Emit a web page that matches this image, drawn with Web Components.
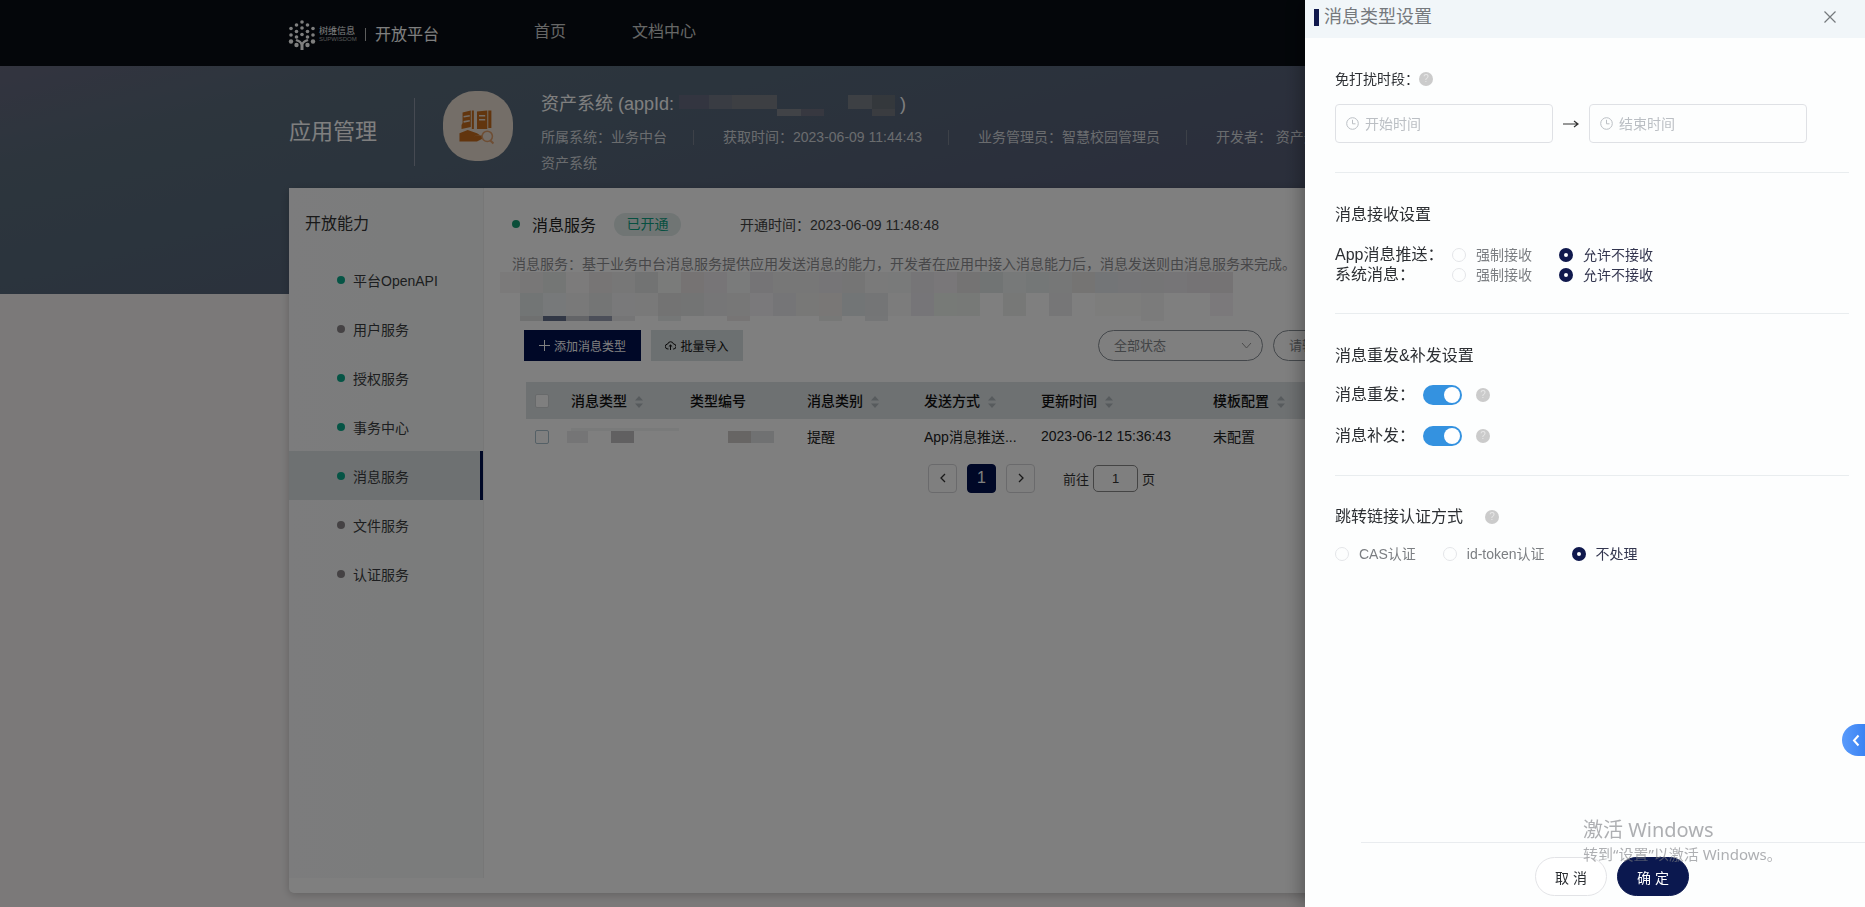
<!DOCTYPE html>
<html lang="zh-CN">
<head>
<meta charset="utf-8">
<title>开放平台</title>
<style>
html,body{margin:0;height:100%}
body{font-family:"Liberation Sans","Noto Sans CJK SC",sans-serif;font-size:14px;color:#333;background:#f6f3f3;overflow:hidden}
</style>
</head>
<body>
<platform-app></platform-app>
<script>
const define = (name, html, init) => {
  const tpl = document.createElement('template');
  tpl.innerHTML = '<style>*{box-sizing:border-box}button,input,select{font:inherit;color:inherit;margin:0}h1,h2,h3,p{margin:0;font-weight:400}</style>' + html;
  customElements.define(name, class extends HTMLElement {
    connectedCallback() {
      if (this.shadowRoot) return;
      this.attachShadow({mode: 'open'}).append(tpl.content.cloneNode(true));
      if (init) init(this.shadowRoot, this);
    }
  });
};

define('app-header', `
<style>
:host{display:block;background:#080d14;color:#fff}
.wrap{max-width:1287px;margin:0 auto;height:66px;display:flex;align-items:center}
.logo{width:28px;height:32px;margin:3px 3px 0 -1px;flex:none}
.brand{width:38px;margin-top:2px;font-size:9px;line-height:10px}
.brand small{display:block;font-size:6px;line-height:6px;color:#aaa}
.sep{width:1px;height:13px;background:#bbb;margin:2px 9px 0 8px}
.name{font-size:16px;line-height:24px;margin-top:4px;width:159px}
nav{display:flex;gap:66px;height:24px;margin-top:-2px}
a{color:#ccc;text-decoration:none;font-size:16px;line-height:24px}
</style>
<div class="wrap">
<svg class="logo" viewBox="0 0 28 32" fill="#fff"><g id="dots"></g><path d="M12.500 31v-4.500c0-2-1-3-5-4.500l1-2c3 1 4.500 2 5.500 3.500 1-1.500 2.500-2.500 5.500-3.500l1 2c-4 1.500-5 2.500-5 4.500V31z"/></svg>
<div class="brand">树维信息<small>SUPWISDOM</small></div><span class="sep"></span><div class="name">开放平台</div>
<nav><a href="#">首页</a><a href="#">文档中心</a></nav>
</div>`, root => {
  const dots = [[14,3],[8.5,6],[19.5,6],[3,9.5],[14,9],[25,9.5],[8.5,12.5],[19.5,12.5],[3,16],[14,15.5],[25,16],[8.5,18],[19.5,18],[3,22.5],[25,22.5],[8.5,26],[19.5,26]];
  root.getElementById('dots').innerHTML = dots.map(([x, y]) => `<circle cx="${x}" cy="${y}" r="${y > 20 ? 2.2 : 1.8}"/>`).join('');
});

define('app-banner', `
<style>
:host{display:block;height:228px;background:linear-gradient(165deg,#66687f 0,#5a6b7b 14%,#56687a 30%,#575f78 55%,#525c70 100%);color:#fff}
.wrap{max-width:1287px;margin:0 auto;padding-top:24px;display:flex;align-items:flex-start}
h1{font-size:22px;line-height:84px;width:125px}
.bar{width:1px;height:68px;margin:8px 28px 0 0;background:#8d95a5;flex:none}
.pic{width:70px;height:70px;margin:1px 28px 0 0;border-radius:32px;background:#e8dcd0;flex:none}
.info{white-space:nowrap}
h2{font-size:18px;line-height:28px;display:flex;align-items:center}
h2 svg{width:222px;height:28px;margin:0 0 0 4px}
.row{display:flex;margin-top:6px;align-items:center}
.row,.sub{line-height:26px;color:#d5d8dd}
i{width:1px;height:15px;background:#7b8291;margin:0 29px 0 26px}
</style>
<div class="wrap">
<h1>应用管理</h1><span class="bar"></span>
<svg class="pic" viewBox="0 0 68 68"><g fill="#c46a1c"><path d="M19 21l8-2v16l-9 2v-4l1-2zM33 20l10-1v18H33z"/><path d="M28 19h2v18h-2zM44 19h3v17h-3z"/><path d="M16 41l8-3 9 3 3 2-7 1 10-1 4 1-10 5H16z"/></g><path d="M20 25l6-1M20 30l6-1M35 24h6M35 28h6" stroke="#e8dcd0" stroke-width="1.5"/><circle cx="43" cy="44" r="5" fill="#e8dcd0" stroke="#dd9c69" stroke-width="1.5"/><path d="M46 48l3 3" stroke="#dd9c69" stroke-width="2"/></svg>
<div class="info">
<h2>资产系统 (appId:<svg viewBox="0 0 221 28" shape-rendering="crispEdges"><path d="M0 5h30v14H0z" fill="#666a80"/><path d="M30 5h23v14H30z" fill="#737987"/><path d="M53 5h45v14H53z" fill="#7a7e87"/><path d="M98 19h24v7H98z" fill="#82878f"/><path d="M122 19h23v7h-23z" fill="#6e7081"/><path d="M169 5h24v14h-24z" fill="#7b8089"/><path d="M193 5h23v14h-23z" fill="#687079"/><path d="M193 19h23v7h-23z" fill="#747980"/></svg>)</h2>
<div class="row"><span>所属系统：业务中台</span><i></i><span>获取时间：2023-06-09 11:44:43</span><i></i><span>业务管理员：智慧校园管理员</span><i></i><span>开发者： 资产开发者</span></div>
<p class="sub">资产系统</p>
</div></div>`);

define('side-item', `
<style>
:host{display:block}
a{display:flex;align-items:center;height:49px;padding-left:48px;color:#3a3d40;text-decoration:none;border-right:3px solid transparent}
a::before{content:"";width:8px;height:8px;border-radius:50%;background:#8a8588;margin-right:8px}
:host([on]) a::before{background:#0ba98a}
:host([active]) a{background:#dde2e5;border-color:#00104e}
</style><a href="#"><slot></slot></a>`);

define('side-menu', `
<style>
:host{display:block;width:195px;flex:none;background:linear-gradient(90deg,#f8f9fa,#f6f9f8);border-right:1px solid #efefef;margin-bottom:15px}
h2{font-size:16px;line-height:24px;padding:24px 0 19px 16px}
</style>
<h2>开放能力</h2>
<side-item on>平台OpenAPI</side-item><side-item>用户服务</side-item><side-item on>授权服务</side-item><side-item on>事务中心</side-item><side-item on active>消息服务</side-item><side-item>文件服务</side-item><side-item>认证服务</side-item>`);

define('pixel-strip', `
<style>:host{display:block;margin-left:-12px}svg{display:block;width:742px;height:49px;opacity:.8}</style>
<svg viewBox="0 0 742 49" shape-rendering="crispEdges"></svg>`, root => {
  const r1 = 'f4f3f2 edecec e3e8e7 f7f4f5 ebe5e6 eaeaeb dfe0e1 f3f5f3 e9e2e0 ece7ec f3f5f6 e5e3e8 ececea ebebea e8e5eb e7e7e6 f3f3f3 f1f3f3 e9e5eb efebf1 e3e2e2 dde4e4 ecefef e3ecea e9eceb e6e4e2 e0e7eb e6e7eb e5e7e9 e9e5eb e5e1e6 e5e2e4'.split(' ');
  const r2 = ['', 'dfe6e5', 'ebf1f3', 'f1eff0', 'e3e7e7', 'f1f1f2', 'efeff1', 'e2e2e2', 'e2e3e4', 'e9e8ea', 'ecebea', 'f3eff6', 'e5e6ea', 'eeedeb', 'efebe9', 'dfe6e8', 'e3e5e8', 'f7f7f7', 'e9e7ee', 'ebf2eb', 'eaf0ea', '', 'eaedec', '', 'e8e8eb', '', 'fafaf7', 'fafaf7', 'f5f6f4', '', '', 'f5f1f4'];
  const r3 = ['', 'd6dada', '3f4d70', 'b8bcc4', '7f87a0', 'e6e6e9', '', 'e6eaea', '', '', 'eae6e6', '', '', '', 'ebedec', '', 'e6e8ea', '', '', '', '', '', '', '', '', '', '', '', 'f4f4f5'];
  const row = (cells, y, h) => cells.map((c, i) => c ? `<rect x="${i ? i * 23 - 3 : 0}" y="${y}" width="${i ? 23 : 20}" height="${h}" fill="#${c}"/>` : '').join('');
  root.querySelector('svg').innerHTML = row(r1, 0, 21) + row(r2, 21, 23) + row(r3, 44, 5);
});

define('message-table', `
<style>
:host{display:block;margin:21px 16px 0 14px}
table{width:100%;border-collapse:collapse;table-layout:fixed}
th,td{padding:0 0 2px;text-align:left;white-space:nowrap}
thead tr{height:37px;background:#dde2e4}
tbody tr{height:36px}
th{font-weight:500;color:#111}
td{color:#222}
th:first-child,td:first-child{padding:0 0 0 9px}
input{appearance:none;display:block;width:14px;height:14px;border:1px solid #d0d4d6;border-radius:2px;background:#fff}
td input{border-color:#a9c0cc}
.s{width:8px;height:12px;margin-left:8px;vertical-align:-2px;fill:#aeb6bb}
.m{display:block;width:112px;height:16px;margin-left:-4px}
</style>
<table>
<colgroup><col style="width:45px"><col style="width:119px"><col style="width:117px"><col style="width:117px"><col style="width:117px"><col style="width:172px"><col></colgroup>
<thead><tr><th><input type="checkbox" aria-label="全选"></th><th>消息类型</th><th class="n">类型编号</th><th>消息类别</th><th>发送方式</th><th>更新时间</th><th>模板配置</th></tr></thead>
<tbody><tr><td><input type="checkbox" aria-label="选择"></td>
<td><svg class="m" viewBox="0 0 112 16"><path d="M0 3h21v12H0z" fill="#ebebec"/><path d="M44 3h23v12H44z" fill="#c3c1c3"/><path d="M4 0h108v3H4z" fill="#f2f5f5"/></svg></td>
<td><svg class="m" viewBox="0 0 112 16"><path d="M42 3h23v12H42z" fill="#cfcbc9"/><path d="M65 3h23v12H65z" fill="#e0e3e5"/></svg></td>
<td>提醒</td><td>App消息推送...</td><td>2023-06-12 15:36:43</td><td>未配置</td></tr></tbody>
</table>`, root => {
  root.querySelectorAll('th:not(:first-child):not(.n)').forEach(th => th.insertAdjacentHTML('beforeend', '<svg class="s" viewBox="0 0 8 12"><path d="M4 0l4 4.500H0zM4 12l4-4.500H0z"/></svg>'));
});

define('page-nav', `
<style>
:host{display:flex;justify-content:flex-start;align-items:center;margin:8px 0 0 416px;height:30px;font-size:13px;gap:10px}
button{width:29px;height:29px;border:1px solid #d5d5d8;border-radius:4px;background:none;padding:0;display:grid;place-items:center}
.cur{background:#00104e;border-color:#00104e;color:#fff;font-size:16px}
svg{width:8px;height:10px;fill:none;stroke:#333;stroke-width:1.3}
label{display:flex;align-items:center;gap:4px;margin-left:18px}
input{width:45px;height:27px;border:1px solid #888;border-radius:5px;background:none;text-align:center;padding:0}
</style>
<button aria-label="上一页"><svg viewBox="0 0 8 10"><path d="M6 1L2 5l4 4"/></svg></button><button class="cur">1</button><button aria-label="下一页"><svg viewBox="0 0 8 10"><path d="M2 1l4 4-4 4"/></svg></button>
<label>前往<input value="1">页</label>`);

define('tool-bar', `
<style>
:host{display:flex;margin:9px 0 0 12px;height:31px;align-items:stretch}
button{border:0;font-size:12px;display:flex;align-items:center;justify-content:center;gap:4px;padding:0;white-space:nowrap}
.add{width:117px;background:#00104e;color:#fff}
.imp{width:92px;background:#d9e0e2;color:#111;margin-left:10px}
svg{fill:none;stroke:currentColor}
.add svg,.imp svg{width:11px;height:11px;stroke-width:1}
.pick{margin-left:355px;position:relative;width:165px}
select,input{width:100%;height:31px;appearance:none;border:1px solid #888f96;border-radius:16px;background:none;color:#85888c;padding:0 15px;font-size:13px}
input{width:165px;margin-left:10px}
input::placeholder{color:#85888c}
.pick svg{position:absolute;right:11px;top:12px;width:11px;height:8px;stroke:#999}
</style>
<button class="add"><svg viewBox="0 0 11 11"><path d="M5.500 0v11M0 5.500h11"/></svg>添加消息类型</button>
<button class="imp"><svg viewBox="0 0 11 11"><path d="M3.500 9H3a2.500 2.500 0 01-.3-5 3 3 0 015.800 0A2.500 2.500 0 018.500 9H8M5.500 10V5M3.800 6.600L5.500 5l1.700 1.600"/></svg>批量导入</button>
<div class="pick"><select aria-label="状态"><option>全部状态</option></select><svg viewBox="0 0 11 8"><path d="M1 1l4.500 5L10 1"/></svg></div>
<input placeholder="请输入" aria-label="关键字">`);

define('service-panel', `
<style>
:host{display:block;flex:1;min-width:0;padding:24px 0 0 28px}
.head{display:flex;align-items:center;height:24px}
.head::before{content:"";width:8px;height:8px;border-radius:50%;background:#159c72;margin-right:12px}
h2{font-size:16px;color:#222;width:82px}
.tag{width:67px;line-height:23px;border-radius:12px;background:#e0eae9;color:#0fa082;text-align:center}
.time{margin-left:59px;color:#444}
.desc{margin-top:20px;line-height:16px;color:#8f8f92;white-space:nowrap}
</style>
<div class="head"><h2>消息服务</h2><span class="tag">已开通</span><span class="time">开通时间：2023-06-09 11:48:48</span></div>
<p class="desc">消息服务：基于业务中台消息服务提供应用发送消息的能力，开发者在应用中接入消息能力后，消息发送则由消息服务来完成。</p>
<pixel-strip></pixel-strip><tool-bar></tool-bar><message-table></message-table><page-nav></page-nav>`);

define('help-icon', `
<style>:host{display:inline-grid;place-items:center;width:14px;height:14px;border-radius:50%;background:#cbcbcb;color:#e6e6e6;font-size:10px;line-height:14px}</style>?`);

define('time-input', `
<style>
:host{display:block;width:218px}
label{display:flex;align-items:center;height:39px;border:1px solid #dfe1e5;border-radius:4px;padding-left:10px}
svg{width:13px;height:13px;fill:none;stroke:#bbbfc4;margin-right:6px}
input{flex:1;min-width:0;border:0;background:none;outline:0;padding:0}
input::placeholder{color:#bbbfc4}
</style><label><svg viewBox="0 0 13 13"><circle cx="6.500" cy="6.500" r="5.800"/><path d="M6.500 2.800v4h3"/></svg><input></label>`, (root, host) => {
  const box = root.querySelector('input');
  box.placeholder = host.getAttribute('hint');
  box.setAttribute('aria-label', host.getAttribute('hint'));
});

define('radio-set', `
<style>
:host{display:flex;gap:27px}
label{display:flex;align-items:center;color:#7b7e82;white-space:nowrap;line-height:20px}
input{appearance:none;width:14px;height:14px;border:1px solid #e3e5e8;border-radius:50%;margin-right:10px}
input:checked{border:5px solid #10194d}
label:has(:checked){color:#33364f}
</style>`, (root, host) => {
  const names = host.getAttribute('items').split('|');
  names.forEach((name, i) => {
    const label = document.createElement('label');
    label.innerHTML = `<input type="radio" name="choice"${i === names.length - 1 ? ' checked' : ''}>${name}`;
    root.append(label);
  });
});

define('toggle-switch', `
<style>
:host{display:block;width:39px;height:20px}
input{appearance:none;display:block;width:39px;height:20px;border-radius:10px;background:#ccc;padding:2px}
input::before{content:"";display:block;width:16px;height:16px;border-radius:50%;background:#fff}
input:checked{background:#3492e0}
input:checked::before{margin-left:19px}
</style><input type="checkbox" role="switch" checked>`, (root, host) => root.querySelector('input').setAttribute('aria-label', host.getAttribute('name')));

define('settings-drawer', `
<style>
:host{display:flex;flex-direction:column;background:#fdfefe;color:#2c2f33;box-shadow:-4px 0 16px rgba(0,0,0,.3)}
header{display:flex;align-items:center;height:38px;padding:0 28px 4px 9px;background:#f1f6f9;flex:none}
header::before{content:"";width:5px;height:17px;background:#10194d;margin-right:5px}
header h2{font-size:18px;line-height:24px;color:#75797d;flex:1}
header button{border:0;background:none;padding:0;width:14px;height:14px}
svg{display:block;fill:none;stroke:#75797d;stroke-width:1.2}
.body{flex:1;padding:0 16px 0 30px}
section{border-bottom:1px solid #e9edef}
section:last-child{border:0}
h3{font-size:16px;line-height:24px}
.row{display:flex;align-items:center;font-size:16px;line-height:20px}
.row>span{width:117px}
.row>radio-set{font-size:14px}
.quiet{padding:31px 0 29px;height:135px}
.line{display:flex;align-items:center;line-height:20px;margin-bottom:15px}
.range{display:flex;align-items:center;gap:10px}
.range svg{stroke:#333}
.recv{padding:30px 0 0;height:141px}
.recv h3{margin-bottom:18px}
.resend{padding:30px 0 0;height:162px}
.resend h3{margin-bottom:6px}
.resend .row{height:41px}
.resend .row>span{width:88px}
.resend help-icon{margin-left:14px}
.auth{padding-top:29px}
.auth h3{display:flex;align-items:center;gap:22px;margin-bottom:15px}
footer{flex:none;margin-left:56px;height:65px;border-top:1px solid #e9ecef;display:flex;gap:10px;padding:14px 0 0 174px}
footer button{width:72px;height:39px;border-radius:20px;border:1px solid #e2e3e6;background:#fff;padding:0}
footer .ok{background:#0b184f;border-color:#0b184f;color:#fff}
</style>
<header><h2>消息类型设置</h2><button aria-label="关闭"><svg viewBox="0 0 14 14" width="14" height="14"><path d="M1.500 1.500l11 11M12.500 1.500l-11 11"/></svg></button></header>
<div class="body">
<section class="quiet"><div class="line">免打扰时段：<help-icon></help-icon></div>
<div class="range"><time-input hint="开始时间"></time-input><svg viewBox="0 0 16 8" width="16" height="8"><path d="M0 4h14M11 1l4 3-4 3"/></svg><time-input hint="结束时间"></time-input></div></section>
<section class="recv"><h3>消息接收设置</h3>
<div class="row"><span>App消息推送：</span><radio-set items="强制接收|允许不接收"></radio-set></div>
<div class="row"><span>系统消息：</span><radio-set items="强制接收|允许不接收"></radio-set></div></section>
<section class="resend"><h3>消息重发&amp;补发设置</h3>
<div class="row"><span>消息重发：</span><toggle-switch name="消息重发"></toggle-switch><help-icon></help-icon></div>
<div class="row"><span>消息补发：</span><toggle-switch name="消息补发"></toggle-switch><help-icon></help-icon></div></section>
<section class="auth"><h3>跳转链接认证方式<help-icon></help-icon></h3>
<radio-set items="CAS认证|id-token认证|不处理"></radio-set></section>
</div>
<footer><button>取 消</button><button class="ok">确 定</button></footer>`);

define('platform-app', `
<style>
:host{display:flex;flex-direction:column;min-height:100vh}
.card{position:relative;flex:1;width:100%;max-width:1287px;margin:-106px auto 14px;display:flex;background:#fff;border-radius:5px;box-shadow:0 2px 8px rgba(0,0,0,.2)}
.mask{position:fixed;inset:0;background:rgba(0,0,0,.5)}
settings-drawer{position:fixed;top:0;right:0;bottom:0;width:560px;max-width:100%}
.tab{position:fixed;right:0;bottom:151px;width:23px;height:32px;border:0;padding:0 0 0 4px;border-radius:16px 0 0 16px;background:linear-gradient(90deg,#5a9bfb,#3a83f3);display:grid;place-items:center}
.tab svg{width:8px;height:13px;fill:none;stroke:#fff;stroke-width:2}
.mark{position:fixed;right:82px;bottom:43px;width:200px;color:rgba(120,122,126,.6);font-family:"Noto Sans","Noto Sans CJK SC",sans-serif;font-size:15px;line-height:20px;white-space:nowrap;pointer-events:none}
.mark b{display:block;font-weight:400;font-size:20px;line-height:28px}
</style>
<app-header></app-header><app-banner></app-banner>
<main class="card"><side-menu></side-menu><service-panel></service-panel></main>
<div class="mask"></div>
<settings-drawer></settings-drawer>
<button class="tab" aria-label="展开"><svg viewBox="0 0 8 13"><path d="M6.500 1.500L2 6.500l4.500 5"/></svg></button>
<div class="mark"><b>激活 Windows</b>转到“设置”以激活 Windows。</div>`);
</script>
</body>
</html>
